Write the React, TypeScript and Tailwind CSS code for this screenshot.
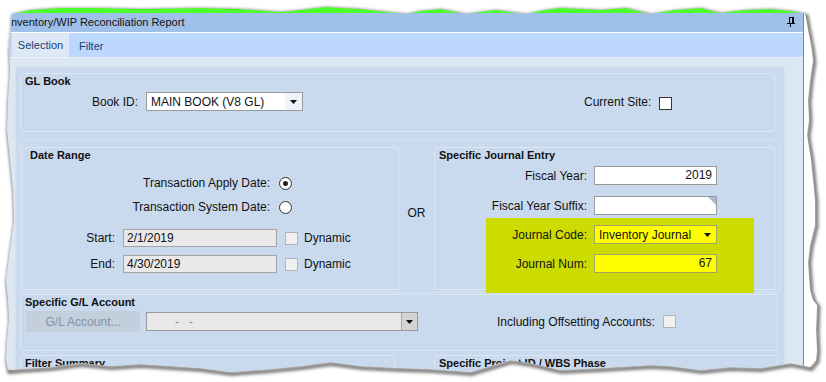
import React from 'react';

// torn paper outline (clockwise), screen coords
const tear: [number, number][] = [
  [12, 14], [30, 10], [60, 8], [100, 8], [140, 9], [200, 8], [240, 9], [280, 12], [300, 10], [325, 7], [360, 9],
  [405, 14], [420, 11], [440, 9], [465, 14], [495, 10], [525, 14], [545, 10], [560, 8], [600, 10], [625, 8],
  [650, 14], [675, 10], [700, 8], [720, 13], [745, 10], [770, 9], [790, 11], [805, 14],
  [806, 18], [808, 30], [811, 45], [813, 60], [810, 80], [808, 100], [809, 120], [807, 135], [811, 160],
  [815, 200], [815, 225], [810, 245], [808, 262], [810, 290], [813, 300], [817, 305], [816, 330], [817, 350],
  [816, 360], [810, 367],
  [790, 363], [760, 368], [730, 367], [700, 370], [670, 366], [650, 365], [600, 368], [560, 370], [530, 363],
  [510, 360], [490, 366], [470, 372], [430, 369], [400, 368], [360, 366], [330, 362], [300, 366], [270, 369],
  [230, 372], [200, 368], [170, 366], [140, 364], [110, 366], [80, 363], [50, 367], [20, 369], [8, 370],
  [6, 360], [7, 340], [9, 320], [8, 300], [6, 280], [10, 250], [14, 220], [13, 190], [10, 160], [7, 130],
  [8, 100], [10, 70], [9, 50], [11, 30],
];
const tearPath = 'M' + tear.map(([x, y]) => `${x} ${y}`).join(' L') + ' Z';
const outside = 'M0 0 H826 V382 H0 Z ' + tearPath;

const Caret = () => (
  <svg width="7" height="4" viewBox="0 0 7 4">
    <path d="M0 0H7L3.5 4Z" fill="#111" />
  </svg>
);

const Pin = () => (
  <svg width="10" height="11" viewBox="0 0 10 11" className="ml-auto">
    <rect x="3" y="0" width="4" height="1" fill="#000" />
    <rect x="3" y="0" width="1" height="6" fill="#000" />
    <rect x="6" y="0" width="2" height="6" fill="#000" />
    <rect x="1" y="6" width="8" height="1" fill="#000" />
    <rect x="4" y="7" width="1" height="3" fill="#000" />
  </svg>
);

const Radio = ({ on }: { on?: boolean }) => (
  <div className="w-[13px] h-[13px] rounded-full border border-[#333] bg-white flex items-center justify-center">
    {on && <div className="w-[5px] h-[5px] rounded-full bg-[#222]" />}
  </div>
);

const DisabledCheck = () => <div className="w-[13px] h-[13px] border border-[#b4b4b4] bg-[#f0f0f0]" />;

const Title = ({ children, pl = 'pl-[4px]' }: { children: React.ReactNode; pl?: string }) => (
  <div className={`relative h-[14px] leading-[14px] font-bold text-[11px] ${pl}`}>{children}</div>
);

export default function App() {
  return (
    <div className="relative w-[826px] h-[382px] overflow-hidden bg-white font-['Liberation_Sans',Arial,sans-serif] text-[12px] text-[#111]">
      <div className="w-[804px] border-r border-[#7d8799] flex flex-col">
        <div className="h-[13px] bg-[#4cff2a]" />
        <div className="h-[19px] bg-[#9fc0e9] flex items-center pl-[11px] pr-[7px] text-[11px]">
          <span>nventory/WIP Reconciliation Report</span>
          <Pin />
        </div>
        <div className="h-[1px] bg-white" />
        <div className="h-[24px] bg-[#bcd9fd] flex items-end pl-[12px] text-[#1c3c72] text-[11px]">
          <div className="w-[57px] h-[24px] bg-[#dde8f5] flex items-center justify-center">Selection</div>
          <div className="h-[24px] pl-[10px] pt-[3px] flex items-center">Filter</div>
        </div>
        <div className="h-[1px] bg-[#edf2f9]" />

        <div className="h-[340px] bg-[#dce7f4] pl-[15px] pt-[8px]">
          <div className="w-[770px] h-[320px] bg-[#c9daef] border-t border-l border-r border-[#d5e2f2] rounded-t-[4px] pl-[4px] pt-[6px]">
            {/* GL Book */}
            <div className="w-[755px] h-[59px] border border-[#dce7f5] rounded-[3px]">
              <Title>GL Book</Title>
              <div className="mt-[4px] h-[19px] flex items-center">
                <div className="w-[117px] text-right">Book ID:</div>
                <div className="ml-[8px] w-[157px] h-[19px] border border-[#9a9a9a] bg-white flex items-center">
                  <span className="pl-[4px] flex-1">MAIN BOOK (V8 GL)</span>
                  <div className="w-[17px] h-full bg-[#eef4fc] flex items-center justify-center">
                    <Caret />
                  </div>
                </div>
                <div className="ml-[281px]">Current Site:</div>
                <div className="ml-[8px] mt-[3px] w-[13px] h-[13px] border border-[#333] bg-white" />
              </div>
            </div>

            {/* Date range / journal entry */}
            <div className="mt-[7px] w-[760px] h-[154px] border border-[#d6e2f2] rounded-[3px] pl-[1px] pt-[7px] flex">
              <div className="w-[377px] h-[143px] border border-[#dce7f5] rounded-[3px]">
                <Title pl="pl-[7px]">Date Range</Title>
                <div className="mt-[11px] h-[20px] flex items-center">
                  <div className="w-[247px] text-right">Transaction Apply Date:</div>
                  <div className="ml-[9px]"><Radio on /></div>
                </div>
                <div className="mt-[4px] h-[20px] flex items-center">
                  <div className="w-[247px] text-right">Transaction System Date:</div>
                  <div className="ml-[9px]"><Radio /></div>
                </div>
                {[['Start:', '2/1/2019', 'mt-[11px]'], ['End:', '4/30/2019', 'mt-[6px]']].map(([l, v, m]) => (
                  <div key={l} className={`${m} h-[20px] flex items-center`}>
                    <div className="w-[92px] text-right">{l}</div>
                    <div className="ml-[8px] w-[154px] h-[18px] border border-[#a4a4a4] bg-[#e9e9e9] pl-[3px] flex items-center">
                      {v}
                    </div>
                    <div className="ml-[8px]"><DisabledCheck /></div>
                    <span className="ml-[6px]">Dynamic</span>
                  </div>
                ))}
              </div>

              <div className="w-[35px] pt-[57px] text-center">OR</div>

              <div className="relative w-[341px] h-[143px] border border-[#dce7f5] rounded-[3px]">
                <div className="absolute left-[51px] top-[70px] w-[268px] h-[75px] bg-[#cddc00]" />
                <Title>Specific Journal Entry</Title>
                <div className="relative mt-[4px] h-[19px] flex items-center">
                  <div className="w-[152px] text-right">Fiscal Year:</div>
                  <div className="ml-[7px] w-[123px] h-[19px] border border-[#9a9a9a] bg-white text-right pr-[4px] leading-[17px]">2019</div>
                </div>
                <div className="relative mt-[11px] h-[19px] flex items-center">
                  <div className="w-[152px] text-right">Fiscal Year Suffix:</div>
                  <div className="relative ml-[7px] w-[123px] h-[19px] border border-[#9a9a9a] bg-white">
                    <svg className="absolute right-0 top-0" width="8" height="8" viewBox="0 0 8 8">
                      <path d="M0 0H8V8Z" fill="#a9bdd6" />
                    </svg>
                  </div>
                </div>
                <div className="relative mt-[10px] h-[19px] flex items-center">
                  <div className="w-[152px] text-right">Journal Code:</div>
                  <div className="ml-[7px] w-[123px] h-[19px] border border-[#a3a35a] bg-[#ffff00] flex items-center">
                    <span className="pl-[4px] flex-1">Inventory Journal</span>
                    <div className="w-[17px] h-full flex items-center justify-center">
                      <Caret />
                    </div>
                  </div>
                </div>
                <div className="relative mt-[10px] h-[19px] flex items-center">
                  <div className="w-[152px] text-right">Journal Num:</div>
                  <div className="ml-[7px] w-[123px] h-[19px] border border-[#a3a35a] bg-[#ffff00] text-right pr-[4px] leading-[17px]">67</div>
                </div>
              </div>
            </div>

            {/* G/L account */}
            <div className="mt-[1px] w-[758px] h-[57px] border border-[#dce7f5] rounded-[3px]">
              <Title>Specific G/L Account</Title>
              <div className="mt-[2px] h-[21px] flex items-center">
                <div className="ml-[5px] w-[114px] h-[21px] bg-[#c4cfdd] text-[#8792a2] flex items-center justify-center">
                  G/L Account...
                </div>
                <div className="ml-[6px] w-[272px] h-[19px] border border-[#9a9a9a] bg-[#e8e8e8] flex items-center">
                  <span className="pl-[28px] flex-1 text-[#8a8a8a] whitespace-pre">-   -</span>
                  <div className="w-[16px] h-full bg-[#d4d4d4] border-l border-[#a8a8a8] flex items-center justify-center">
                    <Caret />
                  </div>
                </div>
                <div className="ml-[79px]">Including Offsetting Accounts:</div>
                <div className="ml-[8px]"><DisabledCheck /></div>
              </div>
            </div>

            <div className="mt-[4px] flex">
              <div className="w-[375px] h-[40px] border border-[#dce7f5] rounded-[3px]">
                <Title>Filter Summary</Title>
              </div>
              <div className="ml-[39px] w-[344px] h-[40px] border border-[#dce7f5] rounded-[3px]">
                <Title>Specific Project ID / WBS Phase</Title>
              </div>
            </div>
          </div>
        </div>
      </div>

      {/* torn paper edge */}
      <svg className="absolute inset-0 pointer-events-none" width="826" height="382" viewBox="0 0 826 382">
        <defs>
          <clipPath id="out">
            <path d={outside} clipRule="evenodd" />
          </clipPath>
          <filter id="blur" x="-5%" y="-5%" width="110%" height="110%">
            <feGaussianBlur stdDeviation="1.6" />
          </filter>
        </defs>
        <path d={outside} fill="#fff" fillRule="evenodd" />
        <g clipPath="url(#out)">
          <path d={tearPath} transform="translate(1.5 2)" fill="none" stroke="#444" strokeOpacity="0.7" strokeWidth="4" filter="url(#blur)" />
        </g>
      </svg>
    </div>
  );
}
